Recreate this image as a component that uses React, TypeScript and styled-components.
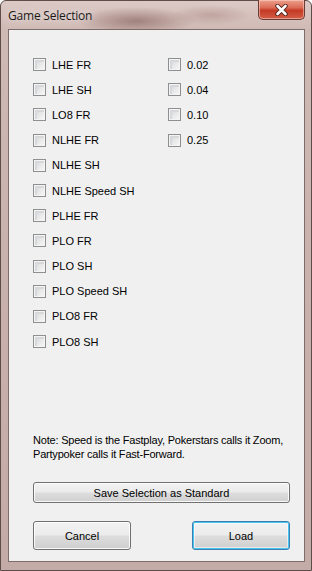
import React from "react";
import styled, { createGlobalStyle } from "styled-components";

const Global = createGlobalStyle`
  html, body { margin: 0; padding: 0; background: #ffffff; }
  body { width: 312px; height: 571px; overflow: hidden; }
`;

const Window = styled.div`
  width: 312px;
  height: 571px;
  box-sizing: border-box;
  border: 1px solid #5e4c49;
  border-radius: 6px 6px 0 0;
  background:
    radial-gradient(ellipse 60px 14px at 135px 20px, rgba(120, 80, 75, 0.55), rgba(120, 80, 75, 0) 100%),
    radial-gradient(ellipse 40px 10px at 210px 14px, rgba(150, 110, 105, 0.35), rgba(150, 110, 105, 0) 100%),
    linear-gradient(180deg, #dcc9c5 0px, #cfb9b4 30px, #c8b1ac 300px, #c3aca7 571px);
  display: flex;
  flex-direction: column;
  font-family: "Liberation Sans", Arial, sans-serif;
`;

const TitleBar = styled.div`
  height: 28px;
  display: flex;
  align-items: flex-start;
  justify-content: space-between;
  padding-left: 7px;
`;

const Title = styled.div`
  font-family: "Open Sans", "Noto Sans", sans-serif;
  font-size: 12px;
  letter-spacing: -0.2px;
  color: #1a1a1a;
  margin-top: 6px;
  text-shadow: 0 0 8px rgba(255, 255, 255, 0.9);
`;

const CloseButton = styled.div`
  width: 47px;
  height: 20px;
  margin-right: 6px;
  margin-top: -1px;
  box-sizing: border-box;
  border: 1px solid #6b3a33;
  border-top: none;
  border-radius: 0 0 5px 5px;
  background: linear-gradient(180deg, #eca08c 0%, #dc6c56 40%, #c43a26 55%, #d45e46 100%);
  box-shadow: inset 0 0 0 1px rgba(255, 220, 210, 0.5);
  display: flex;
  align-items: center;
  justify-content: center;
`;

const Client = styled.div`
  margin: 0 6px 7px 7px;
  height: 533px;
  box-sizing: border-box;
  border: 1px solid #7d6c69;
  background: #f0f0f0;
  padding: 22px 14px 11px 24px;
  display: flex;
  flex-direction: column;
`;

const Columns = styled.div`
  display: flex;
`;

const Column = styled.div<{ $width?: number }>`
  display: flex;
  flex-direction: column;
  width: ${(p) => (p.$width ? `${p.$width}px` : "auto")};
`;

const Row = styled.label`
  height: 25.2px;
  display: flex;
  align-items: center;
  gap: 6px;
  font-size: 11px;
  color: #000;
`;

const Box = styled.span`
  width: 13px;
  height: 13px;
  box-sizing: border-box;
  border: 1px solid #8e8f8f;
  background: linear-gradient(135deg, #cdd0d4 0%, #e9e9ea 55%, #f8f8f8 100%);
  box-shadow: inset 0 0 0 1px #f4f4f4, inset 1px 1px 0 2px #d6d8db;
  flex: none;
`;

const Note = styled.p`
  margin: auto 0 0 0;
  font-size: 11px;
  line-height: 14px;
  letter-spacing: -0.2px;
  white-space: nowrap;
  color: #000;
`;

const WideButton = styled.div`
  margin-top: 21px;
  height: 21px;
`;

const Button = styled.div<{ $default?: boolean; $w?: number; $h: number }>`
  width: ${(p) => (p.$w ? `${p.$w}px` : "auto")};
  height: ${(p) => p.$h}px;
  box-sizing: border-box;
  border: 1px solid ${(p) => (p.$default ? "#3c7fb1" : "#707070")};
  border-radius: 3px;
  background: linear-gradient(180deg, #f2f2f2 0%, #ebebeb 48%, #dddddd 52%, #cfcfcf 100%);
  box-shadow: ${(p) =>
    p.$default
      ? "inset 0 0 0 1px #48c4f0, inset 0 0 0 2px rgba(255,255,255,0.5)"
      : "inset 0 0 0 1px rgba(255,255,255,0.85)"};
  display: flex;
  align-items: center;
  justify-content: center;
  font-size: 11px;
  color: #000;
`;

const ButtonRow = styled.div`
  margin-top: 18px;
  display: flex;
  justify-content: space-between;
`;

const games = [
  "LHE FR",
  "LHE SH",
  "LO8 FR",
  "NLHE FR",
  "NLHE SH",
  "NLHE Speed SH",
  "PLHE FR",
  "PLO FR",
  "PLO SH",
  "PLO Speed SH",
  "PLO8 FR",
  "PLO8 SH",
];

const stakes = ["0.02", "0.04", "0.10", "0.25"];

export default function App() {
  return (
    <>
      <Global />
      <Window>
        <TitleBar>
          <Title>Game Selection</Title>
          <CloseButton>
            <svg width="15" height="12" viewBox="0 0 15 12">
              <path d="M3.5 2 L11.5 10 M11.5 2 L3.5 10" stroke="#4a1f18" strokeWidth="4.4" strokeLinecap="round" />
              <path d="M3.5 2 L11.5 10 M11.5 2 L3.5 10" stroke="#ffffff" strokeWidth="2.6" strokeLinecap="round" />
            </svg>
          </CloseButton>
        </TitleBar>
        <Client>
          <Columns>
            <Column $width={135}>
              {games.map((g) => (
                <Row key={g}>
                  <Box />
                  {g}
                </Row>
              ))}
            </Column>
            <Column>
              {stakes.map((s) => (
                <Row key={s}>
                  <Box />
                  {s}
                </Row>
              ))}
            </Column>
          </Columns>
          <Note>
            Note: Speed is the Fastplay, Pokerstars calls it Zoom,
            <br />
            Partypoker calls it Fast-Forward.
          </Note>
          <WideButton>
            <Button $h={21}>Save Selection as Standard</Button>
          </WideButton>
          <ButtonRow>
            <Button $w={98} $h={29}>Cancel</Button>
            <Button $w={98} $h={29} $default>Load</Button>
          </ButtonRow>
        </Client>
      </Window>
    </>
  );
}
